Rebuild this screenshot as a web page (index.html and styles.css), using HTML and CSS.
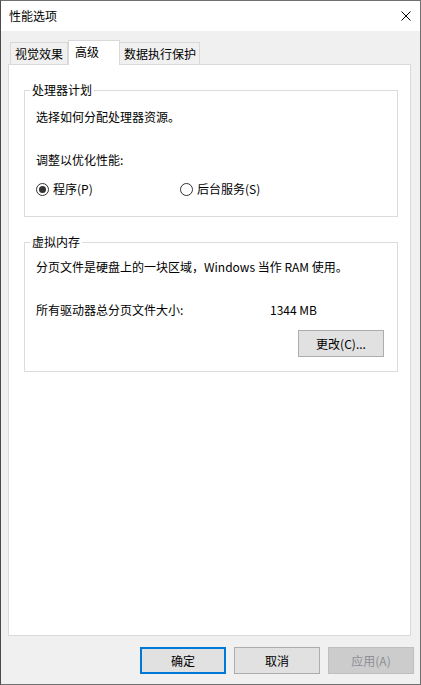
FILE: index.html
```html
<!DOCTYPE html>
<html lang="zh-CN">
<head>
<meta charset="utf-8">
<title>性能选项</title>
<link rel="stylesheet" href="styles.css">
</head>
<body>
<div class="window">
  <div class="titlebar">
    <span class="title">性能选项</span>
    <svg class="close" width="10" height="10" viewBox="0 0 10 10"><path d="M0.5 0.5 L9.5 9.5 M9.5 0.5 L0.5 9.5" stroke="#000" stroke-width="1" fill="none"/></svg>
  </div>
  <div class="content">
    <div class="tabs">
      <div class="tab tab-1">视觉效果</div>
      <div class="tab tab-active">高级</div>
      <div class="tab tab-3">数据执行保护</div>
    </div>
    <div class="panel">
      <fieldset class="group">
        <legend>处理器计划</legend>
        <div class="group-body">
          <p class="line first">选择如何分配处理器资源。</p>
          <p class="line gap27">调整以优化性能:</p>
          <div class="radios">
            <label class="radio radio-1"><span class="dot checked"></span>程序(P)</label>
            <label class="radio"><span class="dot"></span>后台服务(S)</label>
          </div>
        </div>
      </fieldset>
      <fieldset class="group group-2">
        <legend>虚拟内存</legend>
        <div class="group-body body-2">
          <p class="line first-2">分页文件是硬盘上的一块区域，Windows 当作 RAM 使用。</p>
          <div class="line gap27 size-row"><span class="size-label">所有驱动器总分页文件大小:</span><span>1344 MB</span></div>
          <div class="btn-row"><button class="btn">更改(C)...</button></div>
        </div>
      </fieldset>
    </div>
    <div class="footer">
      <button class="btn btn-default">确定</button>
      <button class="btn">取消</button>
      <button class="btn btn-disabled">应用(A)</button>
    </div>
  </div>
</div>
</body>
</html>
```
FILE: styles.css
```css
* { box-sizing: border-box; }
html, body { margin: 0; padding: 0; }
body {
  font-family: "Noto Sans CJK SC", "Noto Sans", sans-serif;
  font-size: 12px;
  color: #000;
  background: #3a3530;
}
.window {
  width: 421px;
  height: 685px;
  border: 1px solid #707070;
  border-left-color: #4f4a44;
  background: #f0f0f0;
  display: flex;
  flex-direction: column;
}
.titlebar {
  height: 30px;
  background: #fff;
  display: flex;
  align-items: center;
  justify-content: space-between;
  padding: 0 9px 0 8px;
  flex: none;
}
.title { line-height: 16px; }
.close { display: block; }
.content {
  padding-top: 9px;
  display: flex;
  flex-direction: column;
}
.tabs {
  display: flex;
  align-items: flex-start;
  height: 24px;
  padding-left: 9px;
}
.tab {
  height: 22px;
  margin-top: 2px;
  border: 1px solid #d9d9d9;
  border-bottom: none;
  background: #f0f0f0;
  line-height: 21px;
  white-space: nowrap;
}
.tab-1 { width: 58px; padding-left: 4px; }
.tab-active {
  width: 52px;
  height: 25px;
  margin-top: 0;
  background: #fff;
  padding-left: 6px;
  line-height: 22px;
  position: relative;
  z-index: 1;
}
.tab-3 { width: 80px; border-left: none; padding-left: 4px; }
.panel {
  margin-left: 7px;
  width: 403px;
  height: 572px;
  border: 1px solid #d9d9d9;
  background: #fff;
  padding: 17px 12px 0 15px;
}
.group {
  margin: 0;
  padding: 0;
  border: 1px solid #dcdcdc;
  min-inline-size: 0;
}
.group legend {
  margin-left: 5px;
  padding: 0 2px;
  line-height: 16px;
}
.group-2 { margin-top: 17px; }
.group-body { padding: 0 0 19px 11px; }
.body-2 { padding-bottom: 14px; }
.line { margin: 0; line-height: 16px; white-space: nowrap; }
.first { margin-top: 11px; }
.first-2 { margin-top: 9px; }
.gap27 { margin-top: 27px; }
.radios {
  margin-top: 13px;
  display: flex;
  height: 16px;
  align-items: center;
}
.radio {
  display: flex;
  align-items: center;
  gap: 4px;
  line-height: 16px;
}
.radio-1 { width: 144px; }
.dot {
  width: 13px;
  height: 13px;
  border: 1px solid #333;
  border-radius: 50%;
  display: flex;
  align-items: center;
  justify-content: center;
  background: #fff;
}
.dot.checked::after {
  content: "";
  width: 7px;
  height: 7px;
  border-radius: 50%;
  background: #333;
}
.size-row { display: flex; }
.size-label { width: 234px; }
.btn-row {
  margin-top: 12px;
  display: flex;
  justify-content: flex-end;
  padding-right: 13px;
}
.btn {
  width: 86px;
  height: 27px;
  border: 1px solid #adadad;
  background: #e1e1e1;
  font-family: "Noto Sans CJK SC", "Noto Sans", sans-serif;
  font-size: 12px;
  color: #000;
  padding: 0;
  margin: 0;
  line-height: 16px;
}
.btn-default { border: 2px solid #0078d7; }
.btn-disabled {
  background: #cccccc;
  border-color: #bfbfbf;
  color: #8e8e96;
}
.footer {
  margin-top: 11px;
  display: flex;
  justify-content: flex-end;
  gap: 8px;
  padding-right: 6px;
}
```
